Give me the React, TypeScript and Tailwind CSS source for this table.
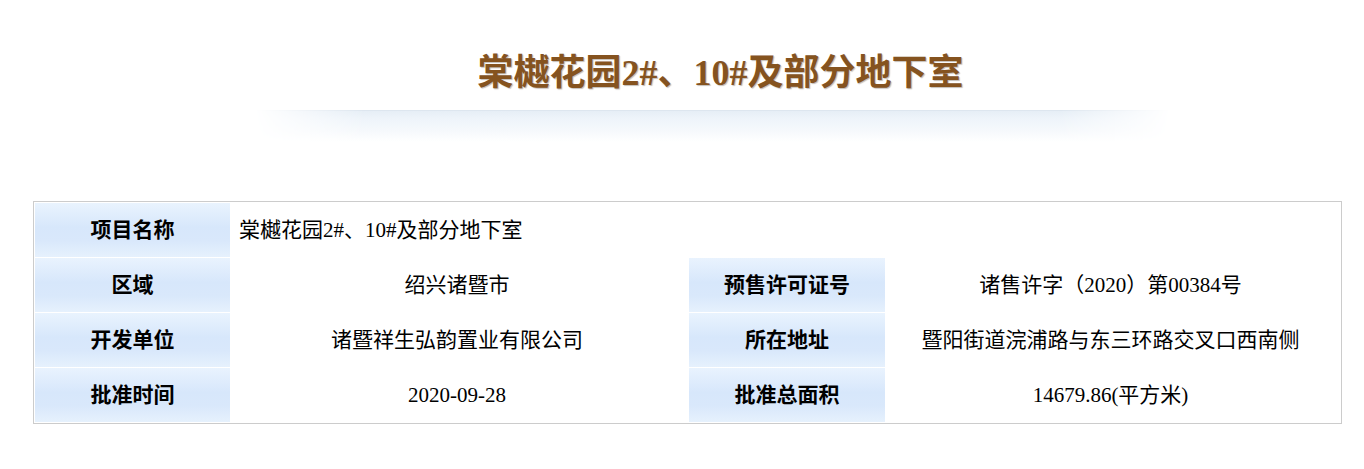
import { FC, Fragment, ReactNode } from "react";

const serif = "font-['Liberation_Serif','Noto_Sans_CJK_SC',serif]";

const Label: FC<{ children: ReactNode }> = ({ children }) => (
  <div className="flex items-center justify-center font-bold bg-[linear-gradient(to_bottom,#e9f3fe_0%,#d7e7fb_45%,#d9e8fb_70%,#e6f1fd_100%)]">
    {children}
  </div>
);

const Value: FC<{ children: ReactNode }> = ({ children }) => (
  <div className="flex items-center justify-center bg-white pr-[5px]">{children}</div>
);

const rows: [string, string, string, string][] = [
  ["区域", "绍兴诸暨市", "预售许可证号", "诸售许字（2020）第00384号"],
  ["开发单位", "诸暨祥生弘韵置业有限公司", "所在地址", "暨阳街道浣浦路与东三环路交叉口西南侧"],
  ["批准时间", "2020-09-28", "批准总面积", "14679.86(平方米)"],
];

const App: FC = () => {
  const title = "棠樾花园2#、10#及部分地下室";

  return (
    <div className={`w-[1364px] h-[469px] bg-white ${serif} text-black`}>
      <div className="pt-[52px] ml-[255px] w-[915px]">
        <h1 className="pl-[16px] text-center text-[36px] leading-[42px] font-bold text-[#85531f] [text-shadow:1px_1px_1px_#c4beb8]">
          {title}
        </h1>
        <div className="mt-[16px] h-[32px] border-t border-[#dde6ef] bg-[linear-gradient(to_bottom,#e6eef6_0%,#eef4fa_25%,#f6f9fc_65%,#ffffff_100%)] [mask-image:linear-gradient(to_right,transparent,black_12%,black_88%,transparent)]" />
      </div>

      <div className="mt-[59px] ml-[33px] w-[1309px] border border-[#cccccc] p-px text-[21px] leading-none">
        <div className="grid grid-cols-[195px_457px_196px_1fr] auto-rows-[54px] gap-px">
          <Label>项目名称</Label>
          <div className="col-span-3 flex items-center pl-[8px] bg-white">{title}</div>
          {rows.map((r) => (
            <Fragment key={r[0]}>
              <Label>{r[0]}</Label>
              <Value>{r[1]}</Value>
              <Label>{r[2]}</Label>
              <Value>{r[3]}</Value>
            </Fragment>
          ))}
        </div>
      </div>
    </div>
  );
};

export default App;
